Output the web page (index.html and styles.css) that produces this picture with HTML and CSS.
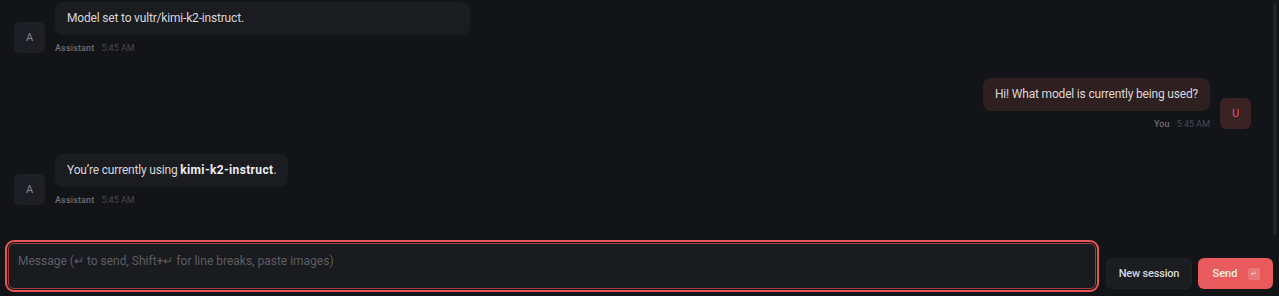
FILE: index.html
```html
<!DOCTYPE html>
<html lang="en">
<head>
<meta charset="utf-8">
<title>Chat</title>
<link rel="stylesheet" href="styles.css">
</head>
<body>
<div class="app">
  <div class="messages">
    <div class="thread">
      <div class="row">
        <div class="avatar avatar-assistant">A</div>
        <div class="msg">
          <div class="bubble bubble-assistant bubble-wide">Model set to vultr/kimi-k2-instruct.</div>
          <div class="meta"><span class="who">Assistant</span><span class="time">5:45 AM</span></div>
        </div>
      </div>
      <div class="row row-user">
        <div class="msg msg-user">
          <div class="bubble bubble-user">Hi! What model is currently being used?</div>
          <div class="meta"><span class="who">You</span><span class="time">5:45 AM</span></div>
        </div>
        <div class="avatar avatar-user">U</div>
      </div>
      <div class="row">
        <div class="avatar avatar-assistant">A</div>
        <div class="msg">
          <div class="bubble bubble-assistant">You’re currently using <strong>kimi-k2-instruct</strong>.</div>
          <div class="meta"><span class="who">Assistant</span><span class="time">5:45 AM</span></div>
        </div>
      </div>
    </div>
    <div class="scrollbar"><div class="scroll-thumb"></div></div>
  </div>
  <div class="composer">
    <textarea class="input" placeholder="Message (↵ to send, Shift+↵ for line breaks, paste images)"></textarea>
    <button class="btn btn-secondary">New session</button>
    <button class="btn btn-primary">Send <span class="kbd">↵</span></button>
  </div>
</div>
</body>
</html>
```
FILE: styles.css
```css
* { box-sizing: border-box; }
html, body {
  margin: 0;
  padding: 0;
  background: #131418;
  height: 296px;
  overflow: hidden;
}
body {
  font-family: Roboto, "Noto Sans", sans-serif;
  color: #d9d9de;
}
.app {
  display: flex;
  flex-direction: column;
  height: 296px;
}
.messages {
  height: 237px;
  flex: none;
  display: flex;
}
.thread {
  flex: 1;
  display: flex;
  flex-direction: column;
  gap: 24px;
  padding: 2px 22px 0 14px;
  overflow: hidden;
}
.scrollbar {
  width: 6px;
  flex: none;
  padding: 3px 2px 2px 0;
}
.scroll-thumb {
  height: 100%;
  background: #222328;
  border-radius: 2px;
}
.row {
  display: flex;
  align-items: flex-end;
  gap: 10px;
}
.row-user { justify-content: flex-end; }
.avatar {
  width: 31px;
  height: 31px;
  border-radius: 6px;
  display: flex;
  align-items: center;
  justify-content: center;
  font-size: 11px;
  font-weight: 400;
  flex: none;
  margin-bottom: 1px;
}
.avatar-assistant { background: #1e1f24; color: #85858e; }
.avatar-user { background: #3a2225; color: #e5565a; }
.msg { display: flex; flex-direction: column; align-items: flex-start; }
.msg-user { align-items: flex-end; }
.bubble {
  font-size: 12px;
  line-height: 17px;
  padding: 8px 12px;
  border-radius: 8px;
  letter-spacing: -0.18px;
}
.bubble strong { font-weight: 700; color: #ececf0; letter-spacing: 0.35px; }
.bubble-assistant { background: #1b1c20; color: #d6d6db; }
.bubble-wide { width: 415px; }
.bubble-user { background: #2e1f21; color: #dcd6d7; }
.meta {
  margin-top: 7px;
  font-size: 9px;
  line-height: 12px;
  display: flex;
  gap: 7px;
}
.who { color: #6c6c74; font-weight: 500; letter-spacing: 0.15px; }
.time { color: #47484e; }
.composer {
  flex: 1;
  display: flex;
  align-items: flex-end;
  gap: 10px;
  padding: 6px 6px 7px 8px;
}
.input {
  flex: 1;
  height: 46px;
  resize: none;
  background: #1a1b1f;
  border: 1px solid #a8393d;
  border-radius: 6px;
  box-shadow: 0 0 0 1px #131418, 0 0 0 3px #e5565a;
  padding: 9px 9px;
  font-family: inherit;
  font-size: 12px;
  line-height: 16px;
  color: #d9d9de;
  outline: none;
}
.input::placeholder { color: #5c5d64; }
.btn {
  height: 31px;
  border-radius: 6px;
  font-family: inherit;
  font-size: 11px;
  font-weight: 500;
  border: none;
  display: flex;
  align-items: center;
  justify-content: center;
}
.btn-secondary {
  width: 86px;
  background: #1c1d21;
  color: #d6d6db;
  border: 1px solid #202126;
  letter-spacing: -0.2px;
}
.btn-primary {
  width: 75px;
  margin-left: -4px;
  background: #e85a5c;
  color: #fff1f1;
  gap: 11px;
  padding-left: 8px;
}
.kbd {
  width: 12px;
  height: 12px;
  border-radius: 2px;
  background: rgba(255, 255, 255, 0.18);
  font-size: 7px;
  line-height: 12px;
  text-align: center;
  color: #fde3e3;
}
```
